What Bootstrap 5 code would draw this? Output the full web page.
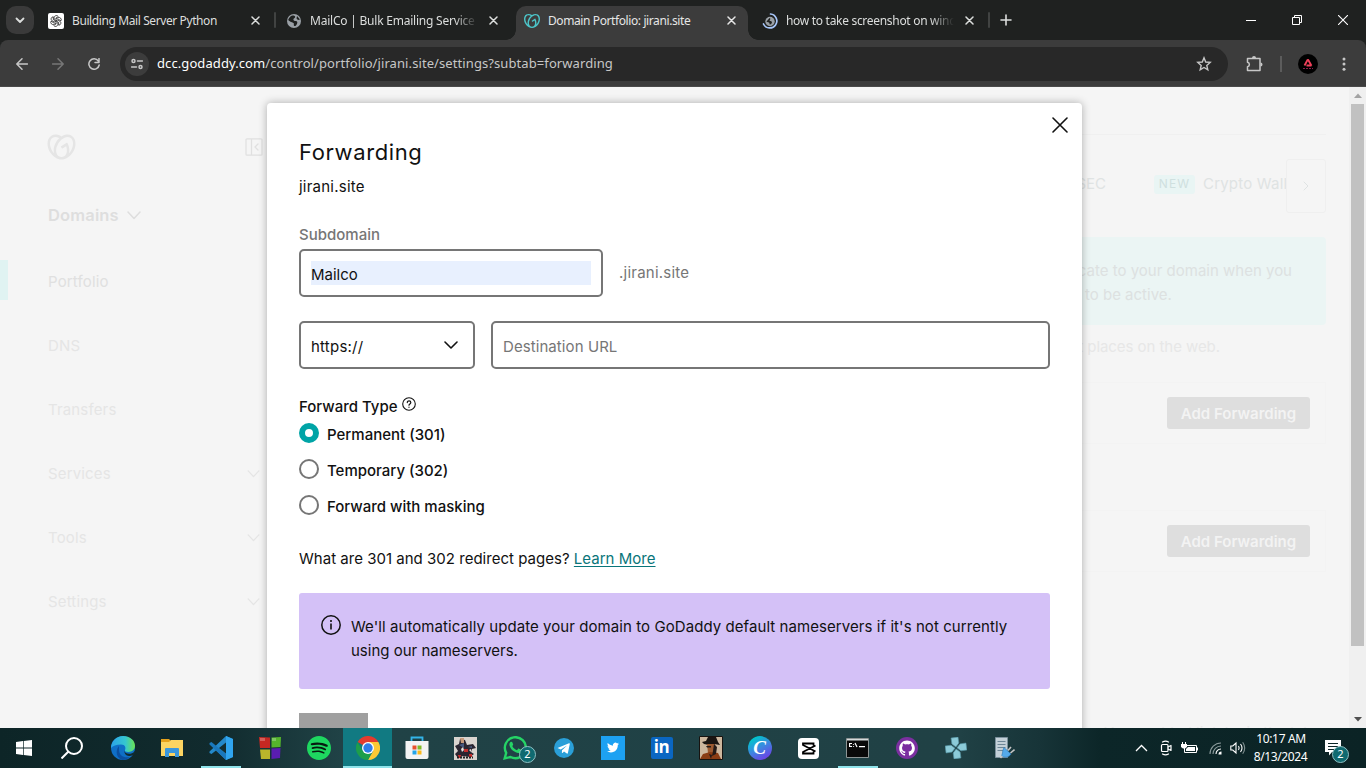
<!DOCTYPE html>
<html lang="en">
<head>
<meta charset="utf-8">
<title>Domain Portfolio: jirani.site</title>
<link href="https://cdn.jsdelivr.net/npm/bootstrap@5.3.0/dist/css/bootstrap.min.css" rel="stylesheet">
<style>
body{width:1366px;height:768px;overflow:hidden;font-family:"Inter","Liberation Sans",sans-serif;color:#111}
svg{display:block;flex:none}
.ln{fill:none;stroke:currentColor;stroke-linecap:round;stroke-linejoin:round}
.tx{white-space:nowrap}
.seg{font-family:"Noto Sans","Open Sans",sans-serif}
/* browser frame */
.strip{height:40px;background:#1f2120;color:#dcdedd;font-size:12px;padding-left:6px}
.tsearch{width:28px;height:28px;border-radius:10px;background:#3a3a3a;margin-right:4px;margin-top:-1px}
.btab{height:34px;width:236px;padding:0 14px 0 10px;margin-top:6px}
.btab .tx{overflow:hidden;width:168px;letter-spacing:-.4px;line-height:18px;margin-top:-5px}
.btab svg{margin-top:-5px}
.btab.wide{width:240px;padding-right:18px}
.fade-r{-webkit-mask-image:linear-gradient(90deg,#000 86%,transparent)}
.btab.on{background:#3c3c3c;border-radius:10px 10px 0 0;width:232px;padding:0 12px 0 8px;position:relative;color:#e6e6e6}
.btab.on:before,.btab.on:after{content:"";position:absolute;bottom:0;width:10px;height:10px}
.btab.on:before{left:-10px;background:radial-gradient(circle at 0 0,transparent 9.5px,#3c3c3c 10px)}
.btab.on:after{right:-10px;background:radial-gradient(circle at 100% 0,transparent 9.5px,#3c3c3c 10px)}
.tsep{width:2px;height:16px;background:#414342;border-radius:1px}
.tools{height:47px;background:#3c3c3c;color:#c7c7c7;box-shadow:inset 0 -1px #4a4a4a;border-radius:8px 8px 0 0}
.toolwrap{background:#1f2120}
.omni{height:34px;width:1108px;border-radius:17px;background:#282828;padding:0 16px 0 5px}
.site-i{width:24px;height:24px;border-radius:50%;background:#3c3c3c}
.url{font-size:13px;color:#c7c7c7;margin-left:8px;letter-spacing:.09px}
.url b{font-weight:400;color:#fff}
.avatar{width:20px;height:20px;border-radius:50%;background:#000}
/* dimmed page */
.page{height:641px;background:#f5f5f5}
.side{width:267px;color:#e0e0e0;font-size:15px;letter-spacing:.15px}
.nav-i{height:64px;padding:2px 7px 0 48px;color:#e5e5e5}
.nav-i.cur{position:relative;color:#e0e0e0}
.nav-i.cur:before{content:"";position:absolute;left:0;top:11px;width:8px;height:40px;background:#e0f3f2}
.main-r{width:244px;margin-left:815px;font-size:15px;color:#dfe3e3}
.clipx{overflow:hidden}
.newtag{background:#e9f5f4;color:#cfe0df;font-size:12px;border-radius:3px;width:41px;height:19px;letter-spacing:1.2px;margin-top:-4px}
.more{width:40px;height:54px;border:1px solid #efefef;border-radius:3px;background:#f5f5f5}
.note{height:88px;background:#ebf5f4;border-radius:0 4px 4px 0;line-height:24px;color:#dde1e1}
.addb{width:143px;height:32px;background:#dedede;border-radius:3px;color:#f3f3f3;font-weight:600;font-size:15px;padding-top:3px}
.fcard{height:62px;border:1px solid #f3f3f3;border-left:0;padding-right:15px}
.sbar{width:17px;background:#f0f0f0}
.thumb{width:13px;height:542px;background:#c1c1c1;margin:1px auto 0}
/* dialog */
.dlg{position:absolute;left:267px;top:16px;width:815px;height:640px;background:#fff;border-radius:4px 4px 0 0;box-shadow:0 0 8px rgba(0,0,0,.3);padding:0 32px;font-size:15px}
.dlg .xbtn{position:absolute;right:14px;top:14px}
.dlg h1{font-size:22px;font-weight:400;line-height:32px;margin:33px 0 0;letter-spacing:.6px}
.fld{border:2px solid #767676;border-radius:5px;height:48px;padding:0 10px}
.sel{background:#e8f0fe;height:24px;line-height:27px}
.g{color:#767676}
.ls2{letter-spacing:.23px}
.rd{width:20px;height:20px;border:2px solid #767676;border-radius:50%;flex:none}
.rd.on{border:6px solid #00a4a6}
.opt{height:36px;font-weight:500}
.opt .tx{padding-top:4px}
.lk{color:#09757a;text-decoration:underline;text-underline-offset:2px}
.info{background:#d4c1f7;border-radius:3px;height:96px;line-height:24px;padding:22px 20px 0 22px;margin-top:22px;letter-spacing:.07px}
/* taskbar */
.task{height:40px;background:linear-gradient(90deg,#0d2527 0,#112b2e 220px,#204246 340px,#204145 960px,#173438 1040px,#0c2628 1100px,#0b2325 100%);color:#fff}
.ti{width:49px;height:40px;position:relative}
.ti.run:after{content:"";position:absolute;left:5px;right:4px;bottom:0;height:2px;background:#8fe3ea}
.ti.act{background:#117a82}
.ti.act:after{left:0;right:0}
.bub{position:absolute;width:17px;height:17px;border-radius:50%;background:#106a70;border:1px solid #8fc0c3;font-size:11px;line-height:14px;text-align:center;color:#fff}
.clock{font-size:12px;line-height:18px;width:60px}
</style>
</head>
<body class="d-flex flex-column">
<div class="strip seg d-flex align-items-center">
  <div class="tsearch d-flex align-items-center justify-content-center"><svg width="10" height="10" viewBox="0 0 10 10"><path class="ln" stroke-width="1.8" d="M1.500 3.500 5 7l3.500-3.500"/></svg></div>
  <div class="btab d-flex align-items-center">
    <svg width="16" height="16" viewBox="0 0 16 16"><rect width="16" height="16" rx="2" fill="#fff"/><g fill="none" stroke="#333" stroke-width=".8"><path id="k" d="M6.200 7V4.600a2.200 2.200 0 0 1 4.100-1L7.900 5v3"/><use href="#k" transform="rotate(60 8 8)"/><use href="#k" transform="rotate(120 8 8)"/><use href="#k" transform="rotate(180 8 8)"/><use href="#k" transform="rotate(240 8 8)"/><use href="#k" transform="rotate(300 8 8)"/></g></svg>
    <span class="tx ms-2">Building Mail Server Python</span>
    <svg class="ms-auto" width="9" height="9" viewBox="0 0 9 9"><path class="ln" stroke-width="1.500" d="M1 1l7 7M8 1 1 8"/></svg>
  </div>
  <div class="tsep"></div>
  <div class="btab wide d-flex align-items-center">
    <svg width="16" height="16" viewBox="0 0 16 16"><circle cx="8" cy="8" r="7" fill="#9aa0a6"/><path fill="#1f2120" d="M6.500 2.500c2 0 3 .5 2.600 1.800S7 5.500 7.500 7s2.500.5 3.500 1.500-.3 3.500-1.500 4.500c-1.500.3-2-.8-1.600-2S6 9.500 5 9 2.500 7.500 2.300 7 4 3 6.500 2.500zM11 3l3 3.500-2 .5-1.500-1.500z"/></svg>
    <span class="tx ms-2 fade-r" style="letter-spacing:-.22px">MailCo | Bulk Emailing Service for</span>
    <svg class="ms-auto" width="9" height="9" viewBox="0 0 9 9"><path class="ln" stroke-width="1.500" d="M1 1l7 7M8 1 1 8"/></svg>
  </div>
  <div class="btab on d-flex align-items-center">
    <svg width="16" height="16" viewBox="0 0 24 24"><path id="gd" fill="#4cc5c9" d="M20.702 2.290c-2.494-1.554-5.778-1.187-8.706.654C9.076 1.104 5.790.736 3.300 2.290c-3.941 2.463-4.420 8.806-1.070 14.167 2.470 3.954 6.333 6.269 9.770 6.226 3.439.043 7.301-2.273 9.771-6.226 3.347-5.361 2.872-11.704-1.069-14.167zM4.042 15.328a12.838 12.838 0 0 1-1.546-3.541 10.120 10.120 0 0 1-.336-3.338c.15-1.980.956-3.524 2.270-4.345 1.315-.822 3.052-.870 4.903-.137.281.113.556.240.825.382A15.110 15.110 0 0 0 7.500 7.540c-2.035 3.255-2.655 6.878-1.945 9.765a13.247 13.247 0 0 1-1.514-1.980zm17.465-3.541a12.866 12.866 0 0 1-1.547 3.540 13.250 13.250 0 0 1-1.513 1.984c.635-2.589.203-5.760-1.353-8.734a.39.39 0 0 0-.563-.153l-4.852 3.032a.397.397 0 0 0-.126.546l.712 1.139a.395.395 0 0 0 .547.126l3.145-1.965c.101.306.203.606.280.916.296 1.086.410 2.214.335 3.337-.15 1.982-.956 3.525-2.270 4.347a4.437 4.437 0 0 1-2.250.650h-.101a4.432 4.432 0 0 1-2.250-.650c-1.314-.822-2.121-2.365-2.270-4.347-.074-1.123.039-2.251.335-3.337a13.212 13.212 0 0 1 4.050-6.482 10.148 10.148 0 0 1 2.849-1.765c1.845-.733 3.586-.685 4.900.137 1.316.822 2.122 2.365 2.271 4.345a10.146 10.146 0 0 1-.330 3.334z"/></svg>
    <span class="tx ms-2">Domain Portfolio: jirani.site</span>
    <svg class="ms-auto" width="9" height="9" viewBox="0 0 9 9"><path class="ln" stroke-width="1.500" d="M1 1l7 7M8 1 1 8"/></svg>
  </div>
  <div class="btab wide d-flex align-items-center" style="padding:0 14px">
    <svg width="16" height="16" viewBox="0 0 16 16"><circle cx="8" cy="8.500" r="4.700" fill="#9aa0a6"/><path fill="#1f2120" d="M7.500 5c1.500.5.5 2 0 2.500s2.500.5 2.500 1.500-1 2.500-2 2.500 0-1.500-1-2-2.500-.5-2.500-1z"/><path class="ln" style="stroke:#a8c7fa" stroke-width="1.700" d="M8.500 1a7 7 0 1 1-7 10"/></svg>
    <span class="tx ms-2 fade-r" style="letter-spacing:-.3px">how to take screenshot on windows</span>
    <svg class="ms-auto" width="9" height="9" viewBox="0 0 9 9"><path class="ln" stroke-width="1.500" d="M1 1l7 7M8 1 1 8"/></svg>
  </div>
  <div class="tsep"></div>
  <svg style="margin-left:10px" width="12" height="12" viewBox="0 0 12 12"><path class="ln" stroke-width="1.600" d="M6 1v10M1 6h10"/></svg>
  <div class="ms-auto d-flex align-items-center text-white" style="gap:36px;padding-right:18px">
    <svg width="10" height="10" viewBox="0 0 10 10"><path stroke="#fff" d="M0 5.500h10"/></svg>
    <svg width="10" height="10" viewBox="0 0 10 10"><path fill="none" stroke="#fff" d="M.5 2.500h7v7h-7zM2.500 2.500v-2h7v7h-2"/></svg>
    <svg width="10" height="10" viewBox="0 0 10 10"><path stroke="#fff" stroke-width="1.100" d="M0 0l10 10M10 0 0 10"/></svg>
  </div>
</div>
<div class="toolwrap"><div class="tools d-flex align-items-center">
  <svg style="margin-left:16px" width="12" height="12" viewBox="0 0 12 12"><path class="ln" stroke-width="1.500" d="M11.500 6H1M6 .8.800 6 6 11.200"/></svg>
  <svg style="margin-left:24px;color:#777" width="12" height="12" viewBox="0 0 12 12"><path class="ln" stroke-width="1.500" d="M.5 6H11M6 .8 11.200 6 6 11.200"/></svg>
  <svg style="margin-left:24px" width="12" height="12" viewBox="0 0 12 12"><path class="ln" stroke-width="1.500" d="M10.300 3A5.200 5.200 0 1 0 11.200 7M11 .5v4H7"/></svg>
  <div class="omni seg d-flex align-items-center" style="margin-left:20px">
    <div class="site-i d-flex align-items-center justify-content-center"><svg width="12" height="12" viewBox="0 0 12 12"><g class="ln" stroke-width="1.500"><circle cx="2.500" cy="3" r="1.500"/><path d="M6.500 3h5M.5 9h5"/><circle cx="9.500" cy="9" r="1.500"/></g></svg></div>
    <span class="url tx"><b>dcc.godaddy.com</b>/control/portfolio/jirani.site/settings?subtab=forwarding</span>
    <svg class="ms-auto" width="16" height="16" viewBox="0 0 16 16"><path fill="none" stroke="currentColor" stroke-width="1.400" d="M8 1.800l1.700 4.200 4.500.4-3.400 3 1 4.400L8 11.500l-3.800 2.300 1-4.400-3.400-3 4.500-.4z"/></svg>
  </div>
  <svg style="margin-left:18px" width="17" height="17" viewBox="0 0 17 17"><path class="ln" stroke-width="1.500" d="M1.500 3.500h12.500v12H1.500v-3.800c2.500-.5 2.500-3.900 0-4.400z"/><path fill="currentColor" d="M6 3a2 2 0 0 1 4 0zM14.500 7.500a2 2 0 0 1 0 4z"/></svg>
  <div style="margin:0 16px 0 17px;width:2px;height:16px;background:#5c5c5c"></div>
  <div class="avatar d-flex justify-content-center"><svg width="20" height="20" viewBox="0 0 20 20"><path fill="none" stroke="#f0405a" stroke-width="1.800" d="M9.800 5.500l-3.300 6M10 5.500l3.500 6.200M8.500 11.500h5"/><path stroke="#8b1c4a" stroke-dasharray="2 1" d="M5 14.500h10"/></svg></div>
  <svg style="margin-left:24px" width="4" height="16" viewBox="0 0 4 16"><g fill="currentColor"><circle cx="2" cy="3" r="1.500"/><circle cx="2" cy="8" r="1.500"/><circle cx="2" cy="13.300" r="1.500"/></g></svg>
</div></div>

<div class="page position-relative overflow-hidden d-flex">
  <div class="side flex-shrink-0">
    <div class="d-flex align-items-center justify-content-between" style="padding:46px 4px 0 47px">
      <svg width="29" height="28" viewBox="0 0 24 24"><use href="#gd" style="filter:grayscale(1) opacity(.22)"/></svg>
      <svg width="18" height="18" viewBox="0 0 18 18"><path class="ln" stroke="#e2e2e2" stroke-width="1.300" d="M2 .8h14a1 1 0 0 1 1 1v14.400a1 1 0 0 1-1 1H2a1 1 0 0 1-1-1V1.800a1 1 0 0 1 1-1zM6.500 1v16M13 6l-3 3 3 3"/></svg>
    </div>
    <div class="d-flex align-items-center fw-semibold" style="padding:42px 0 0 48px;height:66px;font-size:16.500px;color:#dedede"><span class="tx">Domains</span><svg style="margin-left:8px" width="14" height="9" viewBox="0 0 14 9"><path class="ln" stroke-width="1.500" d="M1 1l6 6.500L13 1"/></svg></div>
    <div style="height:22px"></div>
    <div class="nav-i cur d-flex align-items-center">Portfolio</div>
    <div class="nav-i d-flex align-items-center">DNS</div>
    <div class="nav-i d-flex align-items-center">Transfers</div>
    <div class="nav-i d-flex align-items-center justify-content-between">Services<svg width="13" height="8" viewBox="0 0 14 9"><path class="ln" stroke-width="1.500" d="M1 1l6 6.500L13 1"/></svg></div>
    <div class="nav-i d-flex align-items-center justify-content-between">Tools<svg width="13" height="8" viewBox="0 0 14 9"><path class="ln" stroke-width="1.500" d="M1 1l6 6.500L13 1"/></svg></div>
    <div class="nav-i d-flex align-items-center justify-content-between">Settings<svg width="13" height="8" viewBox="0 0 14 9"><path class="ln" stroke-width="1.500" d="M1 1l6 6.500L13 1"/></svg></div>
  </div>
  <div class="main-r flex-shrink-0 clipx">
    <div style="height:48px;border-bottom:1px solid #f0f0f0"></div>
    <div class="d-flex align-items-center" style="height:54px;margin-top:24px">
      <div class="clipx d-flex justify-content-end" style="width:24px;margin-top:-4px"><span class="tx">SEC</span></div>
      <span class="newtag d-flex align-items-center justify-content-center" style="margin-left:48px">NEW</span>
      <span class="tx clipx" style="margin:-4px 0 0 8px;width:83px;letter-spacing:.2px">Crypto Wallet</span>
      <div class="more d-flex align-items-center justify-content-center"><svg width="6" height="10" viewBox="0 0 6 10"><path class="ln" d="M1 1l4 4-4 4"/></svg></div>
    </div>
    <div class="note" style="margin-top:24px;padding-top:22px">
      <div class="clipx d-flex justify-content-end" style="width:210px"><span class="tx">cate to your domain when you</span></div>
      <div class="tx" style="padding-left:3px">to be active.</div>
    </div>
    <div class="clipx d-flex justify-content-end" style="width:138px;margin-top:10px;line-height:24px;color:#e7e7e7"><span class="tx" style="letter-spacing:-.06px">t places on the web.</span></div>
    <div class="fcard d-flex align-items-center justify-content-end" style="margin-top:23px"><span class="addb d-flex align-items-center justify-content-center"><span class="tx">Add Forwarding</span></span></div>
    <div class="fcard d-flex align-items-center justify-content-end" style="margin-top:66px"><span class="addb d-flex align-items-center justify-content-center"><span class="tx">Add Forwarding</span></span></div>
    <div class="tx clipx" style="margin-top:149px;padding-left:22px;height:24px;color:#e9e9e9;line-height:24px">You enabled link login the tab</div>
  </div>
  <div class="sbar ms-auto d-flex flex-column align-items-center">
    <svg width="17" height="16" viewBox="0 0 17 16"><path fill="#a3a3a3" d="M5 11l4-4.500L13 11z"/></svg>
    <div class="thumb"></div>
    <svg class="mt-auto" width="17" height="17" viewBox="0 0 17 17"><path fill="#505050" d="M5 6h8l-4 4.500z"/></svg>
  </div>

  <div class="dlg">
    <svg class="xbtn" width="16" height="16" viewBox="0 0 16 16"><path class="ln" stroke-width="1.600" d="M1 1l14 14M15 1 1 15"/></svg>
    <h1><span class="tx">Forwarding</span></h1>
    <div style="line-height:24px;margin-top:7px"><span class="tx ls2">jirani.site</span></div>
    <div class="g fw-medium" style="line-height:24px;margin-top:24px"><span class="tx">Subdomain</span></div>
    <div class="d-flex align-items-center" style="margin-top:2px">
      <div class="fld d-flex align-items-center" style="width:304px"><div class="sel flex-grow-1">Mailco</div></div>
      <span class="g tx ls2" style="margin-left:16px">.jirani.site</span>
    </div>
    <div class="d-flex gap-3" style="margin-top:24px">
      <div class="fld d-flex align-items-center justify-content-between" style="width:176px;padding-right:15px"><span class="ls2" style="padding-top:4px">https://</span><svg width="14" height="9" viewBox="0 0 14 9"><path class="ln" stroke-width="1.600" d="M1 1l6 6L13 1"/></svg></div>
      <div class="fld flex-grow-1 d-flex align-items-center g"><span class="tx" style="padding-top:4px;letter-spacing:.08px">Destination URL</span></div>
    </div>
    <div class="d-flex align-items-center fw-medium" style="margin-top:26px;height:24px"><span class="tx">Forward Type</span>
      <svg style="margin:-6px 0 0 4px" width="14" height="14" viewBox="0 0 14 14"><circle class="ln" cx="7" cy="7" r="6.300" stroke-width="1.100"/><path class="ln" stroke-width="1.200" d="M5.300 5.600c0-2.300 3.500-2.200 3.500 0C8.800 7 7 6.800 7 8.200M7 10.200v.1"/></svg></div>
    <div style="margin-top:-4px">
      <div class="opt d-flex align-items-center gap-2"><span class="rd on"></span><span class="tx">Permanent (301)</span></div>
      <div class="opt d-flex align-items-center gap-2"><span class="rd"></span><span class="tx">Temporary (302)</span></div>
      <div class="opt d-flex align-items-center gap-2"><span class="rd"></span><span class="tx">Forward with masking</span></div>
    </div>
    <div style="margin-top:24px;line-height:24px;letter-spacing:.02px"><span class="tx">What are 301 and 302 redirect pages? </span><span class="lk tx">Learn More</span></div>
    <div class="info d-flex">
      <svg width="20" height="20" viewBox="0 0 20 20"><circle class="ln" cx="10" cy="10" r="9.200" stroke-width="1.500"/><path stroke="#111" stroke-width="1.600" d="M10 8.500v6M10 5v2"/></svg>
      <div style="margin-left:10px"><div class="tx">We'll automatically update your domain to GoDaddy default nameservers if it's not currently</div><div class="tx" style="letter-spacing:0">using our nameservers.</div></div>
    </div>
    <div style="width:69px;height:48px;background:#a0a0a0;margin-top:24px"></div>
  </div>
</div>

<div class="task seg d-flex align-items-center">
  <div class="ti d-flex align-items-center justify-content-center" style="width:48px"><svg width="16" height="16" viewBox="0 0 16 16"><path fill="#fff" d="M0 2l7-1v6.600H0zM7.700.9 16 0v7.600H7.700zM0 8.400h7V15l-7-1zM7.700 8.400H16V16l-8.300-1z"/></svg></div>
  <div class="ti d-flex align-items-center justify-content-center"><svg style="margin-left:-2px" width="22" height="22" viewBox="0 0 22 22"><circle cx="13" cy="9" r="8" fill="none" stroke="#fff" stroke-width="2"/><path stroke="#fff" stroke-width="2" d="M7.500 14.500.500 21.500"/></svg></div>
  <div class="ti d-flex align-items-center justify-content-center" style="margin-left:1px"><svg width="24" height="24" viewBox="0 0 24 24"><defs><linearGradient id="e1"><stop stop-color="#2ba3e8"/><stop offset=".6" stop-color="#35c6d0"/><stop offset="1" stop-color="#6be352"/></linearGradient></defs><circle cx="12" cy="12" r="12" fill="#0f6fc6"/><path fill="url(#e1)" d="M0 12C0 5 5.500 0 12 0c7 0 12 4.500 12 9.800 0 4-3 6.200-6.500 6.200-3 0-4-1-3.500-2 1-2 .5-5.500-4-5.500C5 8.500 2 10 0 12z"/><path fill="#112b2e" d="M13.500 14.500c0 2.500 3 3.700 6 3.200 2-.4 3.500-1.500 4.500-2.700v3c-1.500 1-3.500 2.200-6 2-3-.3-5-2.500-4.500-5.500z"/><path fill="#0b4fa0" d="M8 14c0 5 4.500 8.500 11 7-2 2-5 3-7.500 3C6 23 3.500 15 8 10z"/></svg></div>
  <div class="ti d-flex align-items-center justify-content-center"><svg width="22" height="20" viewBox="0 0 22 20"><path fill="#e6a21c" d="M0 1h8l2 2v3H0z"/><path fill="#fcd462" d="M0 4h8l2-2h12v16H0z"/><path fill="#3b97dc" d="M4 11q0-1 1-1h12q1 0 1 1v8h-4v-4H8v4H4z"/></svg></div>
  <div class="ti run d-flex align-items-center justify-content-center"><svg width="24" height="24" viewBox="0 0 24 24"><path fill="#2489ca" d="M17 0l7 3v18l-7 3L7 14.500 2.500 18 .5 17V15.500L17 0z"/><path fill="#30a5ef" d="M17 0l7 3v18l-7 3z"/><path fill="#1a78bd" d="M.5 8.500V7l2-1L17 18v6L.5 8.500z"/><path fill="#132e31" d="M17 6.500v11L10 12zM.5 10l2.500 2-2.500 2z"/></svg></div>
  <div class="ti d-flex align-items-center justify-content-center"><svg width="22" height="24" viewBox="0 0 22 24"><path fill="#c62822" d="M0 1l11 .5V12H1z"/><path fill="#55b52c" d="M12.500 1.500l9.500-.5-.5 10-9 .5z"/><path fill="#b9b52b" d="M1 13.500h10V23H2z"/><path fill="#5a1db0" d="M12.500 12.500l9-.5-.500 10-8.500 1z"/><path fill="#fff" opacity=".25" d="M1 2h5v3H1zM13 2h4v3h-4z"/></svg></div>
  <div class="ti d-flex align-items-center justify-content-center"><svg width="24" height="24" viewBox="0 0 24 24"><circle cx="12" cy="12" r="11" fill="#071a10"/><path fill="#1ed760" d="M12 0C5.400 0 0 5.400 0 12s5.400 12 12 12 12-5.400 12-12S18.660 0 12 0zm5.521 17.340c-.24.359-.66.480-1.021.240-2.820-1.740-6.360-2.101-10.561-1.141-.418.122-.779-.179-.899-.539-.12-.421.180-.780.540-.900 4.560-1.021 8.520-.600 11.640 1.320.420.180.479.659.301 1.020zm1.440-3.300c-.301.420-.841.600-1.262.300-3.239-1.980-8.159-2.580-11.939-1.380-.479.120-1.020-.120-1.140-.600-.120-.480.120-1.021.600-1.141C9.600 9.900 15 10.561 18.720 12.840c.361.181.540.780.241 1.200zm.120-3.360C15.240 8.400 8.820 8.160 5.160 9.301c-.6.179-1.200-.181-1.380-.721-.18-.601.180-1.200.720-1.381 4.260-1.260 11.280-1.020 15.721 1.621.539.300.719 1.020.419 1.560-.299.421-1.020.599-1.559.300z"/></svg></div>
  <div class="ti run act d-flex align-items-center justify-content-center"><svg width="24" height="24" viewBox="0 0 24 24"><path fill="#e33b2e" d="M12 12 1.600 6A12 12 0 0 1 22.400 6H12z"/><path fill="#fcc934" d="M12 6h10.400A12 12 0 0 1 12 24l5.200-9z"/><path fill="#1e9e4a" d="M1.600 6 6.800 15 12 18l3-.7L12 24A12 12 0 0 1 1.600 6z"/><circle cx="12" cy="12" r="6" fill="#fff"/><circle cx="12" cy="12" r="4.700" fill="#2f7de9"/></svg></div>
  <div class="ti d-flex align-items-center justify-content-center"><svg width="24" height="24" viewBox="0 0 24 24"><path fill="none" stroke="#33b4e8" stroke-width="1.800" d="M6.500 6V1.500h11V6"/><path fill="#f3f3f3" d="M.5 5h23v16q0 2-2 2h-19q-2 0-2-2z"/><path fill="#e8512c" d="M7.500 9.500h4v4h-4z"/><path fill="#7fba27" d="M12.500 9.500h4v4h-4z"/><path fill="#24a4e8" d="M7.500 14.500h4v4h-4z"/><path fill="#fbb81c" d="M12.500 14.500h4v4h-4z"/></svg></div>
  <div class="ti d-flex align-items-center justify-content-center"><svg width="23" height="23" viewBox="0 0 23 23"><path fill="#d9d4cf" d="M0 0h23v23H0z"/><path fill="#2a2530" d="M6 2l5 1 2 5 6-1 3 4-4 1-1 3 3 2-4 3-7-1-5 2-3-4 3-3-3-5 4-2z"/><path fill="#c79a7b" d="M6 1h4v5H7z"/><path fill="#c22d2c" d="M10 12h4v3h-4zM4 18h3v3H4zM15 17h3v3h-3z"/><path fill="#47597f" d="M5 8l5-2v5zM14 10l4-1v2z"/><path fill="#e6e2df" d="M7 12l2-2 1 3-2 2zM15 13l2-1v3z"/><path stroke="#222" stroke-width="2" stroke-dasharray="2 1" d="M3 20.500h16"/></svg></div>
  <div class="ti d-flex align-items-center justify-content-center"><svg width="24" height="24" viewBox="0 0 24 24"><path fill="none" stroke="#25d366" stroke-width="2.400" d="M1.700 22.300l1.500-5.500A10.500 10.500 0 1 1 7.500 21z"/><path fill="#25d366" d="M7.500 6c.7-.6 1.500-.4 1.800.3l.8 1.900c.2.500-.1 1-.8 1.700.9 2 2.600 3.400 4.700 4.300l1.100-1.400c.3-.3.6-.3 1-.1l2 1c.5.300.4 1.100.100 1.700-.6 1.200-2 1.800-3.300 1.500C10.500 16 7.500 13 6.500 9.500c-.3-1.300 0-2.700 1-3.500z"/></svg><span class="bub" style="left:29px;top:18px">2</span></div>
  <div class="ti d-flex align-items-center justify-content-center"><svg width="20" height="20" viewBox="0 0 20 20"><circle cx="10" cy="10" r="10" fill="#2a9fd8"/><path fill="#fff" d="M3.500 10 15 5.300c.6-.2.9.1.800.8l-1.900 9c-.1.600-.6.700-1.100.4l-2.800-2-1.500 1.400c-.3.200-.6.100-.6-.4l.1-2.300L13 7.500l-6.200 4z"/></svg></div>
  <div class="ti d-flex align-items-center justify-content-center"><svg width="24" height="24" viewBox="0 0 24 24"><path fill="#1da1f2" d="M0 0h24v24H0z"/><path transform="translate(6 5.500) scale(.5)" fill="#fff" d="M23.953 4.570a10 10 0 0 1-2.825.775 4.958 4.958 0 0 0 2.163-2.723c-.951.555-2.005.959-3.127 1.184a4.920 4.920 0 0 0-8.384 4.482C7.690 8.095 4.067 6.130 1.640 3.162a4.822 4.822 0 0 0-.666 2.475c0 1.710.870 3.213 2.188 4.096a4.904 4.904 0 0 1-2.228-.616v.06a4.923 4.923 0 0 0 3.946 4.827 4.996 4.996 0 0 1-2.212.085 4.936 4.936 0 0 0 4.604 3.417 9.867 9.867 0 0 1-6.102 2.105c-.39 0-.779-.023-1.170-.067a13.995 13.995 0 0 0 7.557 2.209c9.053 0 13.998-7.496 13.998-13.985 0-.210 0-.420-.015-.630A9.935 9.935 0 0 0 24 4.590z"/></svg></div>
  <div class="ti d-flex align-items-center justify-content-center"><span class="d-flex align-items-center justify-content-center" style="width:22px;height:22px;background:#0a66c2;border-radius:2px;font:700 17px/18px 'Open Sans',sans-serif;letter-spacing:-.5px"><span style="margin-top:-2px">in</span></span></div>
  <div class="ti d-flex align-items-center justify-content-center"><svg width="24" height="24" viewBox="0 0 24 24"><path fill="#cdb79e" stroke="#171310" d="M.5.5h23v23H.500z"/><path fill="#1b1512" d="M3 6l4-1 2-4h8l2 5 2 3-6-1-5 1-5-1z"/><path fill="#9c5a31" d="M8 8h8l1 6-3 3H9z"/><path fill="#8a3c14" d="M1 23l3-5 7-2 8 1 3 6z"/><path fill="#241a17" d="M15 8l3 3-1 7-4 2 1-5zM7 10h5v1.500H8zM10 18l3 1-1 4z"/></svg></div>
  <div class="ti d-flex align-items-center justify-content-center"><span class="d-flex align-items-center justify-content-center rounded-circle" style="width:24px;height:24px;background:linear-gradient(150deg,#00c4cc 15%,#3d86e0 50%,#7d2ae8)"><span style="font:italic 700 19px/20px 'Liberation Serif',serif">C</span></span></div>
  <div class="ti d-flex align-items-center justify-content-center"><svg width="21" height="21" viewBox="0 0 21 21"><rect width="21" height="21" rx="4" fill="#fff"/><path fill="none" stroke="#000" stroke-width="1.800" d="M17.500 7.500 5 14v1.500h10.500v-2M17.500 13.500 5 7V5.500h10.500v2"/></svg></div>
  <div class="ti run d-flex align-items-center justify-content-center"><svg width="23" height="20" viewBox="0 0 23 20"><path fill="#090909" stroke="#8e9595" d="M.5.500h22v19H.500z"/><path fill="#d5dada" d="M1 1h21v1.500H1z"/><path stroke="#fff" stroke-width="1.200" fill="none" d="M6 5.500H3.600v3H6M7.500 6v.8M7.500 8v.8M9 5l2 4M13 8.700h6"/></svg></div>
  <div class="ti d-flex align-items-center justify-content-center"><svg width="22" height="22" viewBox="0 0 24 24"><circle cx="12" cy="12" r="12" fill="#7b2fa0"/><path transform="translate(3.500 3.500) scale(.71)" fill="#fff" d="M12 .297c-6.630 0-12 5.373-12 12 0 5.303 3.438 9.800 8.205 11.385.6.113.820-.258.820-.577 0-.285-.010-1.040-.015-2.040-3.338.724-4.042-1.610-4.042-1.610C4.422 18.070 3.633 17.700 3.633 17.700c-1.087-.744.084-.729.084-.729 1.205.084 1.838 1.236 1.838 1.236 1.070 1.835 2.809 1.305 3.495.998.108-.776.417-1.305.760-1.605-2.665-.300-5.466-1.332-5.466-5.930 0-1.310.465-2.380 1.235-3.220-.135-.303-.540-1.523.105-3.176 0 0 1.005-.322 3.300 1.230.960-.267 1.980-.399 3-.405 1.020.006 2.040.138 3 .405 2.280-1.552 3.285-1.230 3.285-1.230.645 1.653.240 2.873.120 3.176.765.840 1.230 1.910 1.230 3.220 0 4.610-2.805 5.625-5.475 5.920.420.360.810 1.096.810 2.220 0 1.606-.015 2.896-.015 3.286 0 .315.210.690.825.570C20.565 22.092 24 17.592 24 12.297c0-6.627-5.373-12-12-12"/></svg></div>
  <div class="ti d-flex align-items-center justify-content-center"><svg width="22" height="22" viewBox="0 0 22 22"><g transform="rotate(-8 11 11)" fill="#8ccbd8" stroke="#5695a5" stroke-width=".6"><path id="pp" d="M7.500.5h7v6L11 10 7.500 6.500z"/><use href="#pp" transform="rotate(90 11 11)"/><use href="#pp" transform="rotate(180 11 11)"/><use href="#pp" transform="rotate(270 11 11)"/></g></svg></div>
  <div class="ti d-flex align-items-center justify-content-center"><svg width="20" height="22" viewBox="0 0 20 22"><path fill="#c3d0d8" stroke="#7c919d" d="M.5.500h12v20H.500z"/><path stroke="#6e8797" d="M2.500 4.500h8M2.500 7.500h8M2.500 10.500h8M2.500 13.500h8"/><path fill="#55aaea" stroke="#2877b5" stroke-width=".6" d="M9 10.500l7 6.500c-2.500 4-7 4-9.500 1.500C8 17 7 14 9 10.500z"/><path stroke="#c5c5c5" stroke-width="1.600" d="M13 13.500l3-3.500M15.500 16l4-3.500M7 19l-1.500 2"/></svg></div>
  <div class="ms-auto d-flex align-items-center">
    <svg width="13" height="8" viewBox="0 0 13 8"><path fill="none" stroke="#fff" stroke-width="1.300" d="M1 7l5.500-5.500L12 7"/></svg>
    <svg style="margin-left:12px" width="12" height="16" viewBox="0 0 12 16"><g class="ln" stroke-width="1.200"><rect x="1.500" y="4.500" width="6.500" height="7" rx="1"/><path d="M8 7l3-1.500v5L8 9M2.500 2q3-1.800 6 0M2.500 14q3 1.800 6 0"/></g></svg>
    <svg style="margin-left:9px" width="17" height="12" viewBox="0 0 17 12"><path fill="none" stroke="#fff" d="M5 3.500h10.500v7H3.500V6M16.500 5.500v3"/><path fill="#fff" d="M7 5h7v4H5V7zM0 2h6v3L4 6.500H2L0 5zM1 0h1v2H1zM4 0h1v2H4z"/></svg>
    <svg style="margin-left:11px" width="13" height="13" viewBox="0 0 13 13"><g fill="none" stroke="#8a9a9b" stroke-width="1.100"><path d="M1 12A11 11 0 0 1 12 1M4 12a8 8 0 0 1 8-8"/><path stroke="#fff" d="M7 12a5 5 0 0 1 5-5"/></g><path fill="#fff" d="M9.500 12.500a3 3 0 0 1 3-3v3z"/></svg>
    <svg style="margin-left:8px" width="17" height="14" viewBox="0 0 17 14"><g fill="none" stroke="#fff" stroke-width="1.100"><path d="M.8 5h2L6 2v10L2.800 9h-2zM8.500 5q1.300 2 0 4M10.500 3q3 4 0 8"/><path stroke="#829192" d="M12.700 1.200q4 5.800 0 11.600"/></g></svg>
    <div class="clock text-center" style="margin-left:4px;margin-top:-1px"><div class="tx" style="letter-spacing:-.35px">10:17 AM</div><div class="tx" style="letter-spacing:-.4px;margin-left:-1px">8/13/2024</div></div>
    <div class="position-relative" style="margin:0 24px 0 14px"><svg width="17" height="16" viewBox="0 0 17 16"><path fill="#fff" d="M0 0h16v12H7l-3 3.500V12H0z"/><path stroke="#0c2628" d="M3 3.500h10M3 6.500h10M3 9.500h6"/></svg><span class="bub" style="left:7px;top:6px">2</span></div>
  </div>
</div>
<script src="https://cdn.jsdelivr.net/npm/bootstrap@5.3.0/dist/js/bootstrap.bundle.min.js"></script>
</body>
</html>
